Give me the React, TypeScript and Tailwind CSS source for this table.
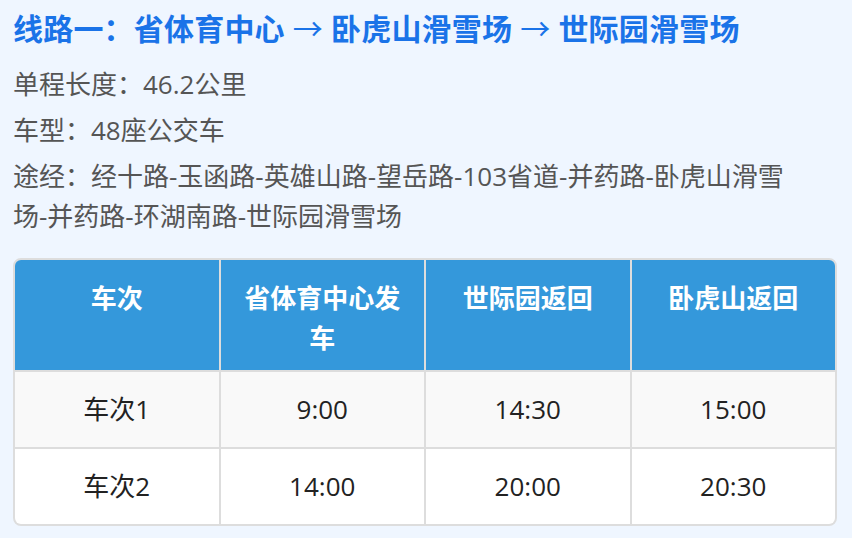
const font = { fontFamily: '"Open Sans", "Noto Sans CJK SC", sans-serif' };

const headers = ["车次", "省体育中心发车", "世际园返回", "卧虎山返回"];

const rows = [
  ["车次1", "9:00", "14:30", "15:00"],
  ["车次2", "14:00", "20:00", "20:30"],
];

export default function App() {
  return (
    <div className="min-h-[538px] bg-[#eff6ff] pl-[13px] pr-[15px] pt-[9px] pb-[12px]" style={font}>
      <h1 className="text-[30px] leading-[40px] font-bold tracking-[0.2px] text-[#1a73e8]">
        线路一：省体育中心 <span className="font-normal">→</span> 卧虎山滑雪场{" "}
        <span className="font-normal">→</span> 世际园滑雪场
      </h1>

      <div className="mt-[15px] max-w-[800px] text-[26px] leading-[40px] text-[#555]">
        <p>单程长度：46.2公里</p>
        <p className="mt-[6px]">车型：48座公交车</p>
        <p className="mt-[6px]">
          途经：经十路-玉函路-英雄山路-望岳路-103省道-并药路-卧虎山滑雪场-并药路-环湖南路-世际园滑雪场
        </p>
      </div>

      <div className="mt-[22px] grid grid-cols-4 gap-[2px] overflow-hidden rounded-lg border-2 border-[#ddd] bg-[#ddd]">
        {headers.map((h) => (
          <div
            key={h}
            className="h-[110px] bg-[#3498db] px-[16px] pt-[18px] text-center text-[26px] leading-[40px] font-bold text-white"
          >
            {h}
          </div>
        ))}
        {rows.map((r, i) =>
          r.map((c, j) => (
            <div
              key={`${i}-${j}`}
              className={`flex h-[75px] items-center justify-center text-[26px] text-[#222] ${
                i === 0 ? "bg-[#f9f9f9]" : "bg-white"
              }`}
            >
              {c}
            </div>
          ))
        )}
      </div>
    </div>
  );
}
